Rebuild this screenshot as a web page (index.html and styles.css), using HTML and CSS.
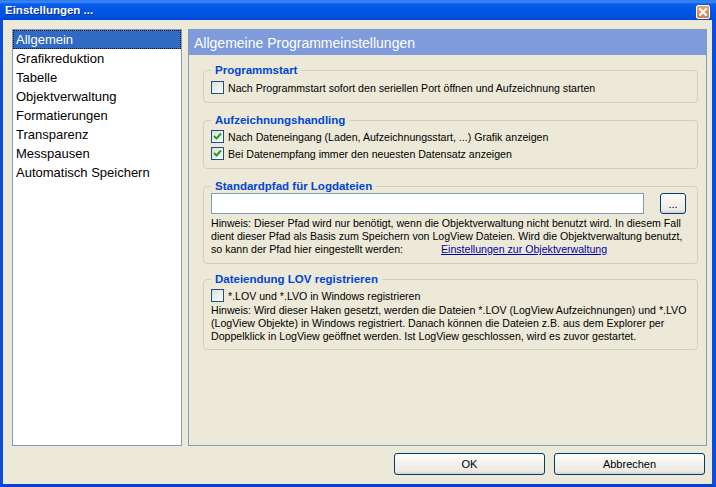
FILE: index.html
```html
<!doctype html>
<html lang="de">
  <head>
    <meta charset="UTF-8" />
    <title>Einstellungen</title>
    <link rel="stylesheet" href="styles.css">
  </head>
  <body>
    <div class="window">
      <div class="titlebar">
        <span class="title">Einstellungen ...</span>
        <span class="close">
          <svg width="8" height="8" viewBox="0 0 8 8">
            <path d="M1 1 L7 7 M7 1 L1 7" stroke="#fff" stroke-width="2" stroke-linecap="square" />
          </svg>
        </span>
      </div>
      <div class="client">
        <div class="content">
          <ul class="pages">
            <li class="active">Allgemein</li>
            <li>Grafikreduktion</li>
            <li>Tabelle</li>
            <li>Objektverwaltung</li>
            <li>Formatierungen</li>
            <li>Transparenz</li>
            <li>Messpausen</li>
            <li>Automatisch Speichern</li>
          </ul>
          <div class="panel">
            <div class="panel-head">Allgemeine Programmeinstellungen</div>
            <div class="panel-body">
              <fieldset class="group first">
                <legend>Programmstart</legend>
                <label class="check">
                  <span class="box"></span>
                  Nach Programmstart sofort den seriellen Port öffnen und Aufzeichnung starten
                </label>
              </fieldset>

              <fieldset class="group">
                <legend>Aufzeichnungshandling</legend>
                <label class="check">
                  <span class="box checked">
                    <svg width="9" height="9" viewBox="0 0 9 9"><path d="M1 4 L3.5 6.5 L8 1.5" fill="none" stroke="#21a121" stroke-width="2" /></svg>
                  </span>
                  Nach Dateneingang (Laden, Aufzeichnungsstart, ...) Grafik anzeigen
                </label>
                <label class="check">
                  <span class="box checked">
                    <svg width="9" height="9" viewBox="0 0 9 9"><path d="M1 4 L3.5 6.5 L8 1.5" fill="none" stroke="#21a121" stroke-width="2" /></svg>
                  </span>
                  Bei Datenempfang immer den neuesten Datensatz anzeigen
                </label>
              </fieldset>

              <fieldset class="group path">
                <legend>Standardpfad für Logdateien</legend>
                <div class="path-row">
                  <input type="text" class="path-input" />
                  <button class="btn small">...</button>
                </div>
                <div class="hint">
                  <div>Hinweis: Dieser Pfad wird nur benötigt, wenn die Objektverwaltung nicht benutzt wird. In diesem Fall</div>
                  <div>dient dieser Pfad als Basis zum Speichern von LogView Dateien. Wird die Objektverwaltung benutzt,</div>
                  <div class="hint-link">
                    <span class="lead">so kann der Pfad hier eingestellt werden:</span>
                    <a href="#">Einstellungen zur Objektverwaltung</a>
                  </div>
                </div>
              </fieldset>

              <fieldset class="group">
                <legend>Dateiendung LOV registrieren</legend>
                <label class="check">
                  <span class="box"></span>
                  *.LOV und *.LVO in Windows registrieren
                </label>
                <div class="hint">
                  <div>Hinweis: Wird dieser Haken gesetzt, werden die Dateien *.LOV (LogView Aufzeichnungen) und *.LVO</div>
                  <div>(LogView Objekte) in Windows registriert. Danach können die Dateien z.B. aus dem Explorer per</div>
                  <div>Doppelklick in LogView geöffnet werden. Ist LogView geschlossen, wird es zuvor gestartet.</div>
                </div>
              </fieldset>
            </div>
          </div>
        </div>
        <div class="footer">
          <button class="btn">OK</button>
          <button class="btn">Abbrechen</button>
        </div>
      </div>
    </div>
  </body>
</html>
```

FILE: styles.css
```css
html,
body {
  margin: 0;
  padding: 0;
}
body {
  font-family: "Liberation Sans", Arial, sans-serif;
  font-size: 10.6px;
  color: black;
  background: #ece9d8;
}
.window {
  width: 716px;
  height: 487px;
  display: flex;
  flex-direction: column;
}

/* title bar */
.titlebar {
  height: 20px;
  flex: none;
  display: flex;
  align-items: center;
  justify-content: space-between;
  padding: 0 6px 0 5px;
  background: linear-gradient(
    to bottom,
    #2a74f2 0,
    #3b8cf8 2px,
    #0a5eee 4px,
    #0055e5 50%,
    #0052df 85%,
    #0046d0 100%
  );
}
.title {
  color: white;
  font-weight: bold;
  font-size: 11.5px;
  text-shadow: 1px 1px 0 #0a2a8a;
}
.close {
  width: 12px;
  height: 12px;
  margin-top: 4px;
  border: 1px solid white;
  border-radius: 2px;
  background: linear-gradient(to bottom, #e6a67c, #d2814f);
  display: flex;
  align-items: center;
  justify-content: center;
}

/* client area */
.client {
  flex: 1;
  display: flex;
  flex-direction: column;
  border-left: 3px solid #0a4ee0;
  border-right: 4px solid #0a4ee0;
  border-bottom: 3px solid #0840d0;
  padding: 9px 5px 9px 9px;
}
.content {
  flex: 1;
  display: flex;
  gap: 6px;
}

/* page list */
.pages {
  flex: none;
  list-style: none;
  margin: 0;
  padding: 0;
  width: 168px;
  background: white;
  border: 1px solid #7f9db9;
  font-size: 13px;
}
.pages li {
  height: 19px;
  line-height: 19px;
  padding-left: 3px;
}
.pages li.active {
  background: #316ac5;
  color: white;
  outline: 1px dotted #1a1a1a;
  outline-offset: -1px;
}

/* settings panel */
.panel {
  flex: 1;
  border: 1px solid #7f9db9;
  display: flex;
  flex-direction: column;
}
.panel-head {
  height: 25px;
  line-height: 26px;
  padding-left: 5px;
  background: #7f9bdc;
  color: white;
  font-size: 14px;
}
.panel-body {
  padding: 8px 8px 0 14px;
}
.group {
  margin: 0 0 10px;
  padding: 1px 7px 6px;
  border: 1px solid #d0d0bf;
  border-radius: 4px;
}
.group.first {
  padding-top: 2px;
}
.group.path {
  padding-top: 0;
  padding-bottom: 7px;
  margin-bottom: 8px;
}
.group legend {
  padding: 0 4px;
  line-height: 14px;
  font-size: 11.5px;
  font-weight: bold;
  color: #0046d5;
}
.check {
  display: flex;
  align-items: center;
  gap: 4px;
  height: 17px;
  white-space: nowrap;
}
.box {
  width: 11px;
  height: 11px;
  border: 1px solid #1c5180;
  background: linear-gradient(135deg, #dcdcd7, #ffffff);
  display: flex;
  align-items: center;
  justify-content: center;
}
.hint {
  line-height: 13px;
  white-space: nowrap;
}
.path .hint {
  margin-top: 3px;
}
.hint-link {
  display: flex;
}
.hint-link .lead {
  width: 230px;
}
.hint-link a {
  color: #0000a8;
}

.path-row {
  display: flex;
  gap: 16px;
  padding-right: 4px;
}
.path-input {
  flex: 1;
  height: 21px;
  box-sizing: border-box;
  border: 1px solid #7f9db9;
  padding: 0 3px;
  margin: 0;
}

/* push buttons */
.btn {
  font-family: "Liberation Sans", Arial, sans-serif;
  font-size: 11px;
  color: black;
  width: 151px;
  height: 22px;
  border: 1px solid #003c74;
  border-radius: 3px;
  background: linear-gradient(to bottom, #ffffff 0, #f4f3ee 40%, #ecebe6 85%, #d6d0c5 100%);
  padding: 0;
}
.btn.small {
  width: 26px;
  height: 21px;
  flex: none;
}
.footer {
  display: flex;
  justify-content: flex-end;
  gap: 9px;
  margin-top: 7px;
  padding-right: 2px;
}
```
